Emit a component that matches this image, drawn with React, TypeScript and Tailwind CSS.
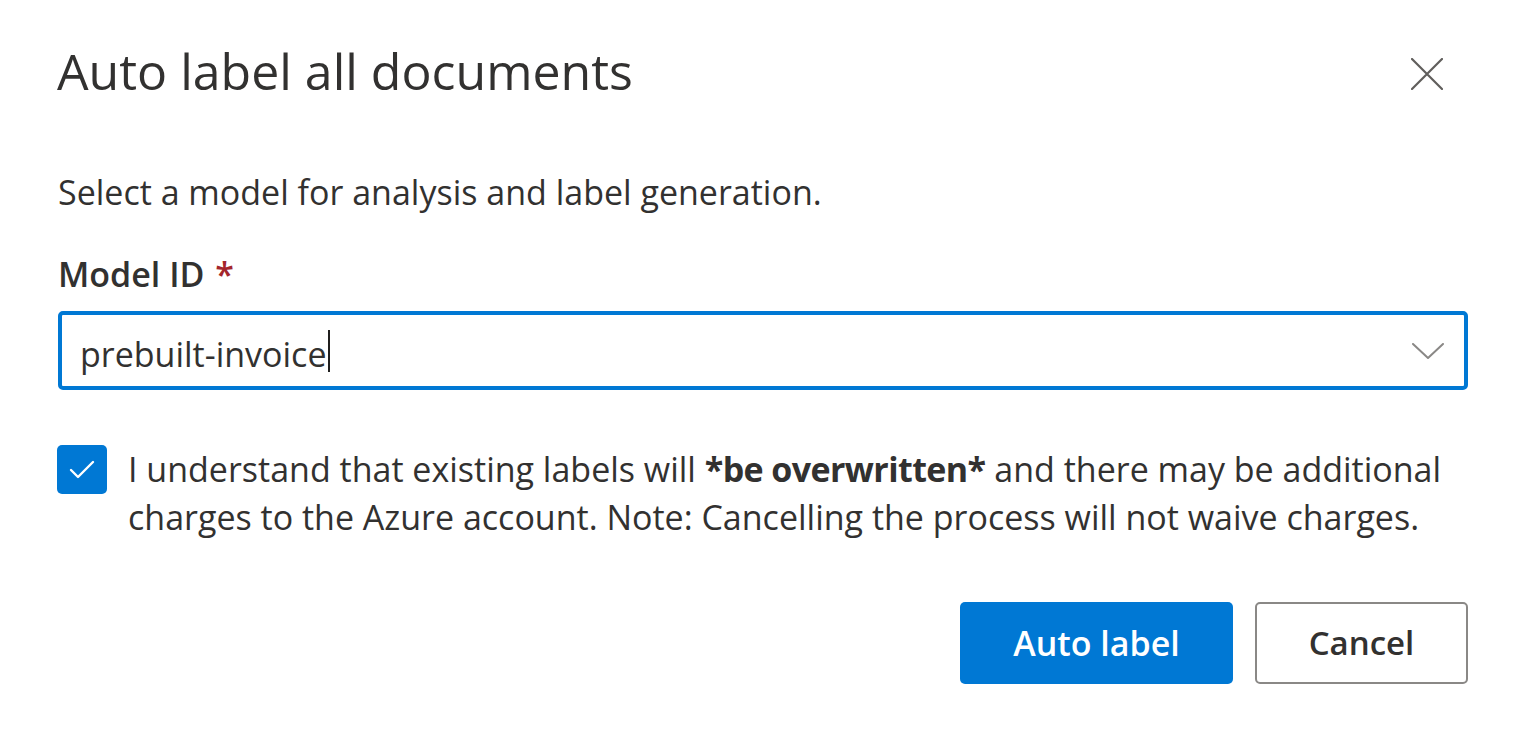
import React, { useState } from 'react';

const font = { fontFamily: '"Open Sans", "Noto Sans", sans-serif' };

export default function App() {
    const [checked, setChecked] = useState(true);

    return (
        <div className="min-h-screen w-full bg-white text-[#323130]" style={font}>
            <div className="pl-[58px] pr-[60px]">
                {/* header */}
                <div className="flex items-start justify-between pt-[41px]">
                    <h1 className="text-[50px] leading-[60px] font-normal text-[#323130] -ml-[1px]">Auto label all documents</h1>
                    <button className="mr-[25px] mt-[17px] flex h-[32px] w-[32px] items-center justify-center text-[#605e5c]">
                        <svg width="32" height="32" viewBox="0 0 32 32" fill="none" stroke="currentColor" strokeWidth="2.2" strokeLinecap="round">
                            <path d="M1 1 L31 31 M31 1 L1 31" />
                        </svg>
                    </button>
                </div>

                <p className="mt-[67px] text-[34px] leading-[48px] text-[#323130] whitespace-nowrap">
                    Select a model for analysis and label generation.
                </p>

                <label className="mt-[34px] block text-[34px] leading-[48px] font-semibold text-[#323130]">
                    Model ID <span className="ml-[2px] text-[#a4262c]">*</span>
                </label>

                <div className="mt-[13px] flex h-[79px] items-center rounded-[5px] border-[4px] border-[#0078d4] pl-[18px] pr-[20px]">
                    <div className="flex flex-1 items-center pt-[6px] text-[34px] leading-[48px] text-[#323130]">
                        <span>prebuilt-invoice</span>
                        <span className="ml-[1px] -mt-[6px] inline-block h-[42px] w-[2px] bg-[#201f1e]" />
                    </div>
                    <svg width="32" height="16" viewBox="0 0 32 16" fill="none" stroke="#8a8886" strokeWidth="2" strokeLinecap="round" strokeLinejoin="round">
                        <path d="M1 1 L16 15 L31 1" />
                    </svg>
                </div>

                <div className="mt-[55px] flex items-start gap-[21px]">
                    <button
                        onClick={() => setChecked(!checked)}
                        className={`-ml-[1px] flex h-[49px] w-[50px] shrink-0 items-center justify-center rounded-[5px] ${checked ? 'bg-[#0078d4]' : 'border-2 border-[#323130] bg-white'}`}
                    >
                        {checked && (
                            <svg width="28" height="22" viewBox="0 0 28 22" fill="none" stroke="white" strokeWidth="2.4" strokeLinecap="round" strokeLinejoin="round">
                                <path d="M3 11 L10 18 L25 3" />
                            </svg>
                        )}
                    </button>
                    <p className="text-[34px] leading-[48px] text-[#323130] whitespace-nowrap">
                        I understand that existing labels will <b className="font-bold tracking-[-0.6px]">*be overwritten*</b> and there may be additional
                        <br />
                        charges to the Azure account. Note: Cancelling the process will not waive charges.
                    </p>
                </div>

                <div className="mt-[61px] flex justify-end gap-[22px]">
                    <button className="h-[82px] w-[273px] rounded-[5px] bg-[#0078d4] text-[34px] font-semibold text-white">
                        Auto label
                    </button>
                    <button className="h-[82px] w-[213px] rounded-[5px] border-2 border-[#8a8886] bg-white text-[33px] font-semibold text-[#323130]">
                        Cancel
                    </button>
                </div>
            </div>
        </div>
    );
}
